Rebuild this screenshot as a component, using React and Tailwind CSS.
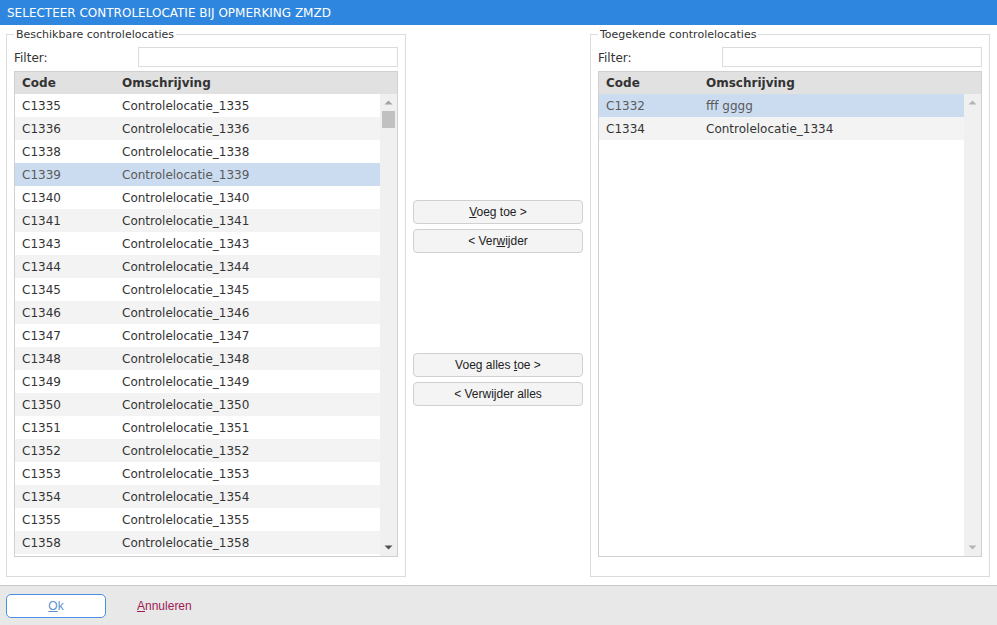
import React from "react";

const leftRows = [
  "1335","1336","1338","1339","1340","1341","1343","1344","1345","1346",
  "1347","1348","1349","1350","1351","1352","1353","1354","1355","1358",
].map((n) => ({ code: "C" + n, desc: "Controlelocatie_" + n }));

const rightRows = [
  { code: "C1332", desc: "fff gggg" },
  { code: "C1334", desc: "Controlelocatie_1334" },
];

function Arrow({ up, color }) {
  return (
    <svg width="9" height="5" viewBox="0 0 9 5" className="block">
      {up ? (
        <polygon points="0.5,4.5 8.5,4.5 4.5,0.5" fill={color} />
      ) : (
        <polygon points="0.5,0.5 8.5,0.5 4.5,4.5" fill={color} />
      )}
    </svg>
  );
}

function Table({ rows, selected, thumb, upColor, downColor }) {
  return (
    <div className="mt-[4px] h-[486px] border border-[#d0d0d0] flex flex-col">
      <div className="h-[22px] bg-[#e1e1e1] flex items-center font-bold text-[#333]">
        <div className="w-[100px] pl-[7px]">Code</div>
        <div className="pl-[7px]">Omschrijving</div>
      </div>
      <div className="flex-1 flex overflow-hidden">
        <div className="flex-1 overflow-hidden bg-white">
          {rows.map((r, i) => (
            <div
              key={r.code}
              className={
                "h-[23px] flex items-center " +
                (i === selected
                  ? "bg-[#cbdcf0] text-[#5a5a5a]"
                  : i % 2 === 1
                  ? "bg-[#f3f3f3] text-[#333]"
                  : "bg-white text-[#333]")
              }
            >
              <div className="w-[100px] pl-[7px]">{r.code}</div>
              <div className="pl-[7px]">{r.desc}</div>
            </div>
          ))}
        </div>
        <div className="w-[17px] bg-[#f0f0f0] flex flex-col">
          <div className="h-[17px] flex items-center justify-center">
            <Arrow up color={upColor} />
          </div>
          <div className="flex-1 px-[2px]">
            {thumb && <div className="h-[17px] bg-[#c1c1c1]" />}
          </div>
          <div className="h-[17px] flex items-center justify-center">
            <Arrow color={downColor} />
          </div>
        </div>
      </div>
    </div>
  );
}

function Panel({ title, rows, selected, thumb, upColor, downColor }) {
  return (
    <fieldset className="w-[400px] h-[549px] border border-[#dcdcdc] px-[7px] pt-[6px]">
      <legend className="px-[2px] text-[11px] leading-[13px] text-[#333]">{title}</legend>
      <div className="flex items-center h-[20px]">
        <div className="w-[124px] text-[#333] pt-[1px]">Filter:</div>
        <div className="flex-1 h-[20px] border border-[#dcdcdc] bg-white" />
      </div>
      <Table rows={rows} selected={selected} thumb={thumb} upColor={upColor} downColor={downColor} />
    </fieldset>
  );
}

function Btn({ children, className = "" }) {
  return (
    <div
      className={
        "h-[24px] w-[170px] rounded-[4px] border border-[#d0d0d0] bg-[#f4f4f4] flex items-center justify-center text-[12px] text-[#222] " +
        className
      }
      style={{ fontFamily: '"Liberation Sans", Arial, sans-serif' }}
    >
      {children}
    </div>
  );
}

export default function App() {
  return (
    <div
      className="w-[997px] h-[625px] flex flex-col bg-white text-[12px] overflow-hidden"
      style={{ fontFamily: '"DejaVu Sans", Verdana, sans-serif' }}
    >
      <div className="h-[25px] shrink-0 bg-[#2e86de] text-white px-[7px] pt-[1px] flex items-center">
        SELECTEER CONTROLELOCATIE BIJ OPMERKING ZMZD
      </div>
      <div className="h-[560px] shrink-0 flex px-[6px] pt-[3px] gap-[7px]">
        <Panel
          title="Beschikbare controlelocaties"
          rows={leftRows}
          selected={3}
          thumb
          upColor="#a3a3a3"
          downColor="#505050"
        />
        <div className="w-[170px] flex flex-col pt-[172px]">
          <Btn>
            <span><span className="underline">V</span>oeg toe &gt;</span>
          </Btn>
          <Btn className="mt-[5px]">
            <span>&lt; Ver<span className="underline">w</span>ijder</span>
          </Btn>
          <Btn className="mt-[100px]">
            <span>Voeg alles <span className="underline">t</span>oe &gt;</span>
          </Btn>
          <Btn className="mt-[5px]">
            <span>&lt; Verwijder alles</span>
          </Btn>
        </div>
        <Panel
          title="Toegekende controlelocaties"
          rows={rightRows}
          selected={0}
          upColor="#b5b5b5"
          downColor="#b5b5b5"
        />
      </div>
      <div
        className="h-[40px] shrink-0 border-t border-[#c8c8c8] bg-[#e8e8e8] flex items-start pt-[8px] px-[6px]"
        style={{ fontFamily: '"Liberation Sans", Arial, sans-serif' }}
      >
        <div className="w-[100px] h-[24px] rounded-[5px] border border-[#4a90e2] bg-white flex items-center justify-center text-[#5b8fd0]">
          <span><span className="underline">O</span>k</span>
        </div>
        <div className="ml-[31px] h-[24px] flex items-center text-[#9e1a55]">
          <span><span className="underline">A</span>nnuleren</span>
        </div>
      </div>
    </div>
  );
}
